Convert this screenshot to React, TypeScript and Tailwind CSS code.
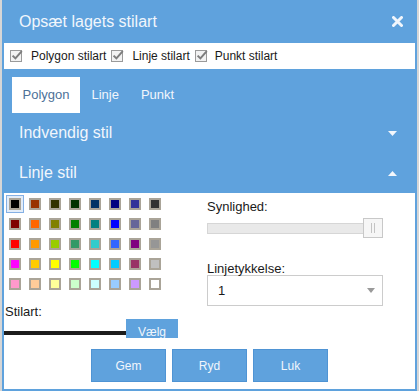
import React from 'react';

const BLUE = 'bg-[#5fa2dd]';

const palette: string[][] = [
  ['#000000', '#993300', '#333300', '#003300', '#003366', '#000080', '#333399', '#333333'],
  ['#800000', '#ff6600', '#808000', '#008000', '#008080', '#0000ff', '#666699', '#808080'],
  ['#ff0000', '#ff9900', '#99cc00', '#339966', '#33cccc', '#3366ff', '#800080', '#969696'],
  ['#ff00ff', '#ffcc00', '#ffff00', '#00ff00', '#00ffff', '#00ccff', '#993366', '#c0c0c0'],
  ['#ff99cc', '#ffcc99', '#ffff99', '#ccffcc', '#ccffff', '#99ccff', '#cc99ff', '#ffffff'],
];

const CheckIcon = () => (
  <svg width="14" height="14" viewBox="0 0 14 14" className="shrink-0">
    <rect x="0.5" y="1.5" width="11" height="11" fill="#f2f2f2" stroke="#9a9a9a" />
    <path d="M2.6 6.6 L5.4 9.4 L11.8 2.2" fill="none" stroke="#7d7d7d" strokeWidth="2" />
  </svg>
);

const Caret = ({ up }: { up?: boolean }) => (
  <svg width="9" height="5" viewBox="0 0 9 5">
    <path d={up ? 'M0 5 L4.5 0 L9 5 Z' : 'M0 0 L9 0 L4.5 5 Z'} fill="#f3f7fc" />
  </svg>
);

const StyleDialog: React.FC = () => {
  return (
    <div className="w-[419px] h-[391px] bg-[#d6d6d6] overflow-hidden font-['Liberation_Sans',Arial,sans-serif]">
      <div className={`ml-[2px] w-[415px] h-[391px] ${BLUE} px-[2px] pb-[2px] flex flex-col`}>
        {/* title */}
        <div className="h-[43px] shrink-0 flex items-center justify-between pl-[15px] pr-[12px]">
          <span className="text-[16px] text-[#f1f6fc]">Opsæt lagets stilart</span>
          <svg width="11" height="11" viewBox="0 0 11 11">
            <path d="M1.5 1.5 L9.5 9.5 M9.5 1.5 L1.5 9.5" stroke="#f1f6fc" strokeWidth="3" strokeLinecap="round" />
          </svg>
        </div>

        {/* layer toggles */}
        <div className="h-[26px] shrink-0 bg-white flex items-center pl-[6px] text-[12px] text-[#1a1a1a]">
          <CheckIcon />
          <span className="ml-[7px]">Polygon stilart</span>
          <span className="ml-[5px]"><CheckIcon /></span>
          <span className="ml-[7px]">Linje stilart</span>
          <span className="ml-[5px]"><CheckIcon /></span>
          <span className="ml-[6px]">Punkt stilart</span>
        </div>

        {/* tabs */}
        <div className="h-[44px] shrink-0 pt-[8px] pl-[8px] flex gap-[1px] text-[13px]">
          <div className="h-[36px] px-[10.5px] flex items-center bg-white text-[#4d7198]">Polygon</div>
          <div className="h-[36px] px-[10.5px] flex items-center text-[#f1f6fc]">Linje</div>
          <div className="h-[36px] px-[10.5px] flex items-center text-[#f1f6fc]">Punkt</div>
        </div>

        {/* accordion */}
        <div className="h-[40px] shrink-0 flex items-center justify-between pl-[15px] pr-[18px] text-[16px] text-[#f1f6fc]">
          <span>Indvendig stil</span>
          <Caret />
        </div>
        <div className="h-[40px] shrink-0 flex items-center justify-between pl-[15px] pr-[18px] text-[16px] text-[#f1f6fc]">
          <span>Linje stil</span>
          <Caret up />
        </div>

        {/* content */}
        <div className="flex-1 bg-white flex flex-col">
          <div className="flex">
            <div className="w-[200px] pl-[1px] pt-[1px]">
              <div className="grid grid-cols-[repeat(8,20px)]">
                {palette.flat().map((c, i) => (
                  <div key={i} className="w-[20px] h-[20px] flex items-center justify-center">
                    <div
                      className={
                        i === 0
                          ? 'w-[18px] h-[18px] border border-[#85b0e4] bg-[#e3edf9] flex items-center justify-center'
                          : 'w-[18px] h-[18px] flex items-center justify-center'
                      }
                    >
                      <div className="w-[12px] h-[12px] border-[2px] border-[#aaa498]" style={{ backgroundColor: c }} />
                    </div>
                  </div>
                ))}
              </div>
              <div className="mt-[10px] text-[13px] leading-[15px] text-[#1a1a1a]">Stilart:</div>
              <div className="h-[19px] overflow-hidden flex items-start -ml-[1px]">
                <div className="mt-[12px] w-[122px] h-[4px] bg-[#1c1c1c]" />
                <div className={`w-[52px] h-[30px] ${BLUE} text-[12px] leading-[14px] pt-[6px] text-center text-[#f1f6fc]`}>
                  Vælg
                </div>
              </div>
            </div>

            <div className="ml-[3px] w-[176px] pt-[6px] text-[13px] text-[#1a1a1a]">
              <div className="leading-[15px]">Synlighed:</div>
              <div className="mt-[4px] h-[20px] relative">
                <div className="absolute left-0 right-[6px] top-[5px] h-[11px] bg-[#e9e9e9] border border-[#d6d6d6]" />
                <div className="absolute right-0 top-0 w-[20px] h-[20px] bg-[#f6f6f6] border border-[#c8c8c8] flex items-center justify-center gap-[2px]">
                  <div className="w-[1px] h-[10px] bg-[#c4c4c4]" />
                  <div className="w-[1px] h-[10px] bg-[#c4c4c4]" />
                </div>
              </div>
              <div className="mt-[24px] leading-[13px]">Linjetykkelse:</div>
              <div className="h-[31px] border border-[#cccccc] flex items-center justify-between pl-[10px] pr-[7px]">
                <span>1</span>
                <svg width="8" height="5" viewBox="0 0 8 5">
                  <path d="M0 0 L8 0 L4 5 Z" fill="#9a9a9a" />
                </svg>
              </div>
            </div>
          </div>

          <div className="mt-[11px] flex justify-center gap-[6px] text-[12px] text-[#f1f6fc]">
            <div className={`w-[75px] h-[33px] ${BLUE} border border-[#4f94d4] flex items-center justify-center`}>Gem</div>
            <div className={`w-[75px] h-[33px] ${BLUE} border border-[#4f94d4] flex items-center justify-center`}>Ryd</div>
            <div className={`w-[75px] h-[33px] ${BLUE} border border-[#4f94d4] flex items-center justify-center`}>Luk</div>
          </div>
        </div>
      </div>
    </div>
  );
};

export default function App() {
  return <StyleDialog />;
}
